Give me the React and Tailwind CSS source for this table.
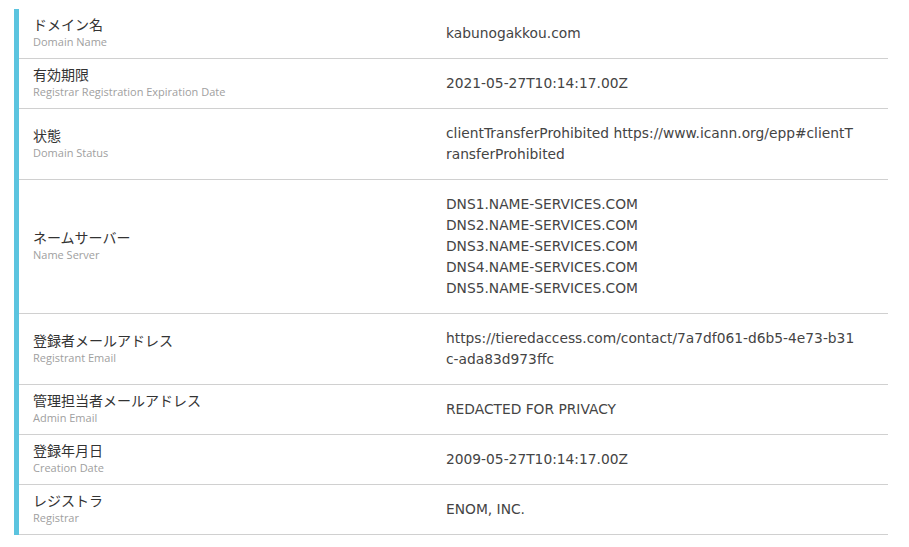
import React from 'react'

const rows = [
  { ja: 'ドメイン名', en: 'Domain Name', value: ['kabunogakkou.com'] },
  { ja: '有効期限', en: 'Registrar Registration Expiration Date', value: ['2021-05-27T10:14:17.00Z'] },
  { ja: '状態', en: 'Domain Status', value: ['clientTransferProhibited https://www.icann.org/epp#clientTransferProhibited'] },
  {
    ja: 'ネームサーバー',
    en: 'Name Server',
    value: [
      'DNS1.NAME-SERVICES.COM',
      'DNS2.NAME-SERVICES.COM',
      'DNS3.NAME-SERVICES.COM',
      'DNS4.NAME-SERVICES.COM',
      'DNS5.NAME-SERVICES.COM',
    ],
  },
  { ja: '登録者メールアドレス', en: 'Registrant Email', value: ['https://tieredaccess.com/contact/7a7df061-d6b5-4e73-b31c-ada83d973ffc'] },
  { ja: '管理担当者メールアドレス', en: 'Admin Email', value: ['REDACTED FOR PRIVACY'] },
  { ja: '登録年月日', en: 'Creation Date', value: ['2009-05-27T10:14:17.00Z'] },
  { ja: 'レジストラ', en: 'Registrar', value: ['ENOM, INC.'] },
]

export default function App() {
  return (
    <div className="min-h-screen bg-white pt-[9px] pl-[14px] font-['Open_Sans','Noto_Sans_CJK_JP',sans-serif] text-[#333]">
      <div className="w-[874px] border-l-[5px] border-[#5bc4df]">
        {rows.map((row) => (
          <div key={row.en} className="grid grid-cols-[413px_1fr] border-b border-[#d0d0d0]">
            <div className="flex flex-col justify-center px-[14px] pb-[3px]">
              <div className="text-[14px] leading-[20px]">{row.ja}</div>
              <div className="text-[11px] leading-[14px] text-[#a0a0a0]">{row.en}</div>
            </div>
            <div className="py-[14px] pl-[14px] pr-[33px] font-['DejaVu_Sans',sans-serif] text-[13.8px] leading-[21px] text-[#444] break-all">
              {row.value.map((v) => (
                <div key={v}>{v}</div>
              ))}
            </div>
          </div>
        ))}
      </div>
    </div>
  )
}
